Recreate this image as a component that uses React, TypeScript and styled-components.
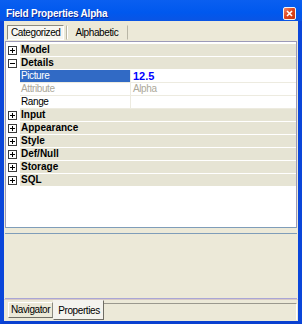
import React from "react";
import styled, { createGlobalStyle } from "styled-components";

const GlobalStyle = createGlobalStyle`
  html, body {
    margin: 0;
    padding: 0;
    background: #ffffff;
  }
  body {
    font-family: "Liberation Sans", Arial, sans-serif;
    font-size: 10px;
    letter-spacing: -0.4px;
    color: #000000;
  }
`;

const Frame = styled.div`
  width: 302px;
  height: 324px;
  display: flex;
  flex-direction: column;
  background: #0a4ade;
`;

const TitleBar = styled.div`
  height: 21px;
  box-sizing: border-box;
  display: flex;
  align-items: flex-end;
  justify-content: space-between;
  padding: 0 6px 1px 6px;
  background: linear-gradient(180deg, #0a5ff0 0%, #0058ee 60%, #0a54e4 100%);
`;

const Title = styled.span`
  font-weight: bold;
  font-size: 10px;
  letter-spacing: -0.2px;
  line-height: 13px;
  color: #ffffff;
  text-shadow: 1px 1px 0 #0a2a9c;
`;

const CloseButton = styled.div`
  width: 13px;
  height: 13px;
  box-sizing: border-box;
  border: 1px solid #f4f4f4;
  border-radius: 2px;
  background: linear-gradient(135deg, #f08a6a 0%, #e0471f 45%, #c83510 100%);
  display: flex;
  align-items: center;
  justify-content: center;
`;

const Body = styled.div`
  flex: 1;
  display: flex;
  flex-direction: column;
  background: #ece9d8;
  border-left: 4px solid #0a46da;
  border-right: 4px solid #0a46da;
  border-bottom: 3px solid #0a40d0;
`;

const TopTabs = styled.div`
  height: 20px;
  display: flex;
  align-items: flex-start;
  padding: 4px 0 0 3px;
  box-sizing: border-box;
  gap: 2px;
`;

const TopTab = styled.div<{ $active?: boolean }>`
  height: 15px;
  box-sizing: border-box;
  line-height: 13px;
  padding: 0 ${(p) => (p.$active ? "2px 0 3px" : "9px")};
  border: 1px solid;
  border-color: ${(p) =>
    p.$active ? "#8c8a80 #ffffff #ffffff #8c8a80" : "transparent #b9b6a6 transparent #b9b6a6"};
  background: ${(p) => (p.$active ? "#f7f6f1" : "transparent")};
  box-shadow: ${(p) => (p.$active ? "none" : "inset 1px 0 0 #ffffff")};
`;

const Grid = styled.div`
  flex: 1;
  margin: 0 1px;
  background: #ffffff;
  border: 1px solid #9c9ab8;
  border-bottom-color: #7f9db9;
  padding-top: 2px;
`;

const Row = styled.div<{ $category?: boolean }>`
  display: grid;
  grid-template-columns: ${(p) => (p.$category ? "14px 1fr" : "14px 111px 1fr")};
  height: 13px;
`;

const Gutter = styled.div`
  display: flex;
  align-items: center;
  padding-left: 2px;
  height: 12px;
`;

const CategoryLabel = styled.div`
  background: #e6e4d4;
  border-bottom: 1px solid #ffffff;
  font-weight: bold;
  font-size: 10px;
  letter-spacing: 0;
  line-height: 12px;
  padding-left: 1px;
`;

const NameCell = styled.div<{ $selected?: boolean; $disabled?: boolean }>`
  border-bottom: 1px solid #edebe0;
  border-right: 1px solid #edebe0;
  line-height: 12px;
  padding-left: 1px;
  background: ${(p) => (p.$selected ? "#316ac5" : "transparent")};
  color: ${(p) => (p.$selected ? "#ffffff" : p.$disabled ? "#aca899" : "#000000")};
`;

const ValueCell = styled.div<{ $bold?: boolean; $disabled?: boolean }>`
  border-bottom: 1px solid #edebe0;
  line-height: 12px;
  padding-left: 2px;
  color: ${(p) => (p.$bold ? "#0000ff" : p.$disabled ? "#aca899" : "#000000")};
  font-size: ${(p) => (p.$bold ? "11px" : "10px")};
  letter-spacing: ${(p) => (p.$bold ? "0" : "-0.4px")};
  font-weight: ${(p) => (p.$bold ? "bold" : "normal")};
`;

const Splitter = styled.div`
  height: 5px;
`;

const Description = styled.div`
  height: 64px;
  margin: 0 1px;
  border-top: 1px solid #7f9db9;
  border-bottom: 1px solid #a9a6d6;
  background: #ece9d8;
`;

const BottomTabs = styled.div`
  height: 22px;
  display: flex;
  align-items: flex-start;
  padding-left: 4px;
  box-sizing: border-box;
  border-top: 1px solid #d8c8c4;
`;

const BottomTab = styled.div<{ $active?: boolean }>`
  box-sizing: border-box;
  height: ${(p) => (p.$active ? "20px" : "16px")};
  margin-top: ${(p) => (p.$active ? "0" : "2px")};
  line-height: ${(p) => (p.$active ? "18px" : "13px")};
  padding: ${(p) => (p.$active ? "1px 3px 0 4px" : "0 2px")};
  background: ${(p) => (p.$active ? "#f4f3ee" : "#ece9d8")};
  border: 1px solid;
  border-color: ${(p) =>
    p.$active ? "transparent #6f6d64 #6f6d64 transparent" : "#ffffff #8c8a80 #6f6d64 #ffffff"};
`;

const TabFiller = styled.div`
  flex: 1;
  height: 16px;
  margin-top: 3px;
  margin-right: 1px;
  border-top: 1px solid #9a988e;
  border-right: 1px solid #ffffff;
`;

const Box = ({ open }: { open?: boolean }) => (
  <svg width="9" height="9" viewBox="0 0 9 9">
    <rect x="0.5" y="0.5" width="8" height="8" fill="#ffffff" stroke="#3c3c3c" />
    <line x1="2" y1="4.5" x2="7" y2="4.5" stroke="#000" />
    {!open && <line x1="4.5" y1="2" x2="4.5" y2="7" stroke="#000" />}
  </svg>
);

const Category = ({ label, open }: { label: string; open?: boolean }) => (
  <Row $category>
    <Gutter>
      <Box open={open} />
    </Gutter>
    <CategoryLabel>{label}</CategoryLabel>
  </Row>
);

const Property = ({
  name,
  value,
  selected,
  disabled,
}: {
  name: string;
  value?: string;
  selected?: boolean;
  disabled?: boolean;
}) => (
  <Row>
    <Gutter />
    <NameCell $selected={selected} $disabled={disabled}>
      {name}
    </NameCell>
    <ValueCell $bold={selected} $disabled={disabled}>
      {value}
    </ValueCell>
  </Row>
);

export default function App() {
  return (
    <>
      <GlobalStyle />
      <Frame>
        <TitleBar>
          <Title>Field Properties Alpha</Title>
          <CloseButton>
            <svg width="7" height="7" viewBox="0 0 7 7">
              <path d="M1 1 L6 6 M6 1 L1 6" stroke="#ffffff" strokeWidth="1.6" />
            </svg>
          </CloseButton>
        </TitleBar>
        <Body>
          <TopTabs>
            <TopTab $active>Categorized</TopTab>
            <TopTab>Alphabetic</TopTab>
          </TopTabs>
          <Grid>
            <Category label="Model" />
            <Category label="Details" open />
            <Property name="Picture" value="12.5" selected />
            <Property name="Attribute" value="Alpha" disabled />
            <Property name="Range" />
            <Category label="Input" />
            <Category label="Appearance" />
            <Category label="Style" />
            <Category label="Def/Null" />
            <Category label="Storage" />
            <Category label="SQL" />
          </Grid>
          <Splitter />
          <Description />
          <BottomTabs>
            <BottomTab>Navigator</BottomTab>
            <BottomTab $active>Properties</BottomTab>
            <TabFiller />
          </BottomTabs>
        </Body>
      </Frame>
    </>
  );
}
